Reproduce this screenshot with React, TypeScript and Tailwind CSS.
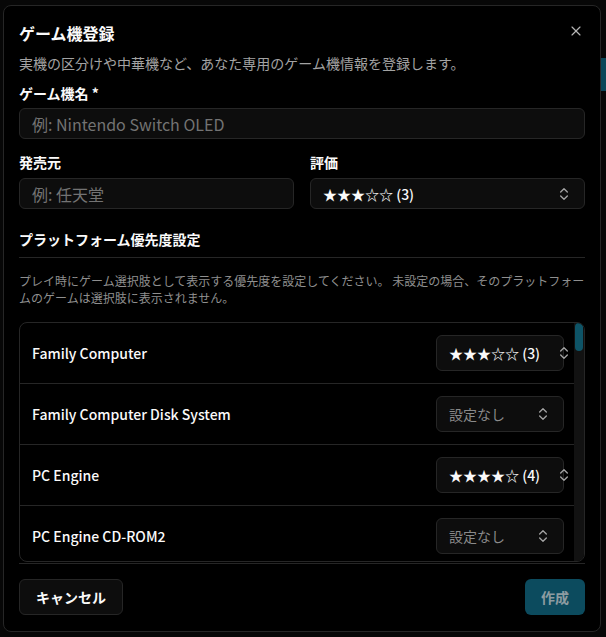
import { X, ChevronsUpDown } from 'lucide-react'

const platforms = [
  { name: 'Family Computer', rating: 3 },
  { name: 'Family Computer Disk System', rating: 0 },
  { name: 'PC Engine', rating: 4 },
  { name: 'PC Engine CD-ROM2', rating: 0 },
]

const stars = (n: number) => '★'.repeat(n) + '☆'.repeat(5 - n) + ` (${n})`

function RowSelect({ rating }: { rating: number }) {
  return (
    <button className="flex h-9 w-32 shrink-0 items-center justify-between gap-4 rounded-md border border-[#262626] bg-[#0d0d0d] px-3 text-sm leading-5">
      {rating > 0 ? (
        <span className="whitespace-nowrap font-medium text-[#fafafa]">{stars(rating)}</span>
      ) : (
        <span className="whitespace-nowrap text-[#8a8a8a]">設定なし</span>
      )}
      <ChevronsUpDown className="size-4 shrink-0 text-[#a3a3a3]" strokeWidth={2} />
    </button>
  )
}

export default function App() {
  return (
    <div className="flex h-[637px] w-[606px] overflow-hidden bg-[#070707] font-['Noto_Sans_CJK_JP','Noto_Sans',sans-serif] text-[#fafafa]">
      <div className="w-[3px] shrink-0" />
      <div className="mt-[5px] flex h-fit w-[598px] shrink-0 flex-col rounded-lg border border-[#262626] bg-black px-[15px] pt-[15px] pb-[16px]">
        {/* Header */}
        <div className="flex items-start justify-between">
          <h2 className="text-base leading-6 font-bold">ゲーム機登録</h2>
          <X className="mt-[2px] mr-[1px] size-4 text-[#b5b5b5]" strokeWidth={1.75} />
        </div>
        <p className="mt-2 text-sm leading-5 text-[#a3a3a3]">
          実機の区分けや中華機など、あなた専用のゲーム機情報を登録します。
        </p>

        {/* Name */}
        <label className="mt-[10px] text-sm leading-5 font-bold">ゲーム機名 *</label>
        <div className="mt-[5px] flex h-[31px] items-center rounded-md border border-[#262626] bg-[#0d0d0d] px-3 text-base text-[#737373]">
          例: Nintendo Switch OLED
        </div>

        {/* Maker / rating */}
        <div className="mt-[13px] grid grid-cols-2 gap-4">
          <div className="flex flex-col">
            <label className="text-sm leading-5 font-bold">発売元</label>
            <div className="mt-[6px] flex h-[31px] items-center rounded-md border border-[#262626] bg-[#0d0d0d] px-3 text-base text-[#737373]">
              例: 任天堂
            </div>
          </div>
          <div className="flex flex-col">
            <label className="text-sm leading-5 font-bold">評価</label>
            <div className="mt-[6px] flex h-[31px] items-center justify-between rounded-md border border-[#262626] bg-[#0d0d0d] px-3 text-sm">
              <span className="font-medium">{stars(3)}</span>
              <ChevronsUpDown className="size-4 text-[#a3a3a3]" />
            </div>
          </div>
        </div>

        {/* Platform priority */}
        <h3 className="mt-[20px] text-sm leading-5 font-bold">プラットフォーム優先度設定</h3>
        <div className="mt-[8px] h-px bg-[#262626]" />
        <p className="mt-[14px] text-xs leading-[17px] text-[#8f8f8f]">
          プレイ時にゲーム選択肢として表示する優先度を設定してください。 未設定の場合、そのプラットフォームのゲームは選択肢に表示されません。
        </p>

        <div className="mt-[16px] border-b border-[#262626] pb-px">
          <div className="flex h-[240px] overflow-hidden rounded-lg border border-[#262626]">
            <div className="flex-1">
              {platforms.map((p) => (
                <div
                  key={p.name}
                  className="flex h-[61px] items-center justify-between border-b border-[#262626] pr-[10px] pl-3"
                >
                  <span className="text-sm font-medium">{p.name}</span>
                  <RowSelect rating={p.rating} />
                </div>
              ))}
            </div>
            <div className="w-[10px] shrink-0 bg-[#121212] px-px">
              <div className="h-[28px] rounded-full bg-[#0e5467]" />
            </div>
          </div>
        </div>

        {/* Footer */}
        <div className="mt-[15px] flex items-center justify-between">
          <button className="h-9 rounded-md border border-[#262626] bg-[#0d0d0d] px-4 text-sm leading-5 font-bold">
            キャンセル
          </button>
          <button className="h-9 rounded-md bg-[#0c4b5e] px-4 text-sm leading-5 font-bold text-[#8d9ca1]">
            作成
          </button>
        </div>
      </div>
      <div className="flex-1 pt-[58px]">
        <div className="h-[33px] bg-[#0b4658]" />
      </div>
    </div>
  )
}
